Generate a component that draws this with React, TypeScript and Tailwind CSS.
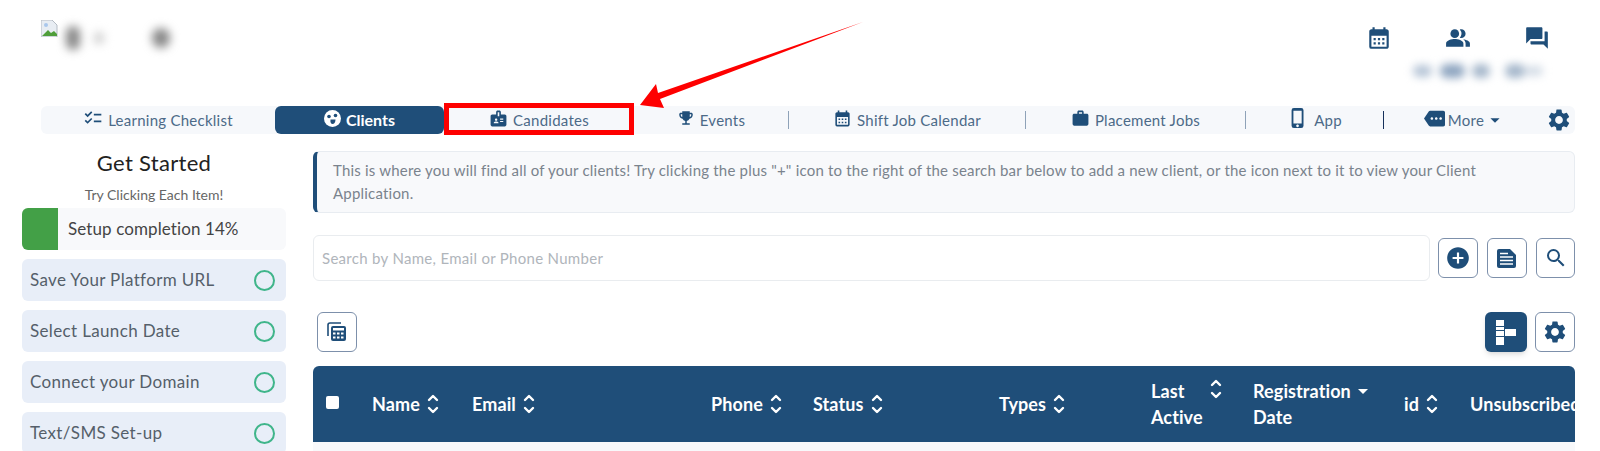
import React from 'react';
import { MdCalendarMonth, MdPeopleAlt, MdForum, MdChecklist, MdBadge, MdEmojiEvents, MdPhoneIphone, MdMore, MdWork, MdArrowDropDown, MdSettings, MdAddCircle, MdSearch } from 'react-icons/md';

const steps = ['Save Your Platform URL', 'Select Launch Date', 'Connect your Domain', 'Text/SMS Set-up'];

const SortIcon: React.FC = () => (
  <svg width="14" height="22" viewBox="0 0 14 22" fill="none" stroke="white" strokeWidth="2.4" strokeLinecap="round" strokeLinejoin="round" className="ml-[6px] shrink-0">
    <path d="M3 7l4-4 4 4" />
    <path d="M3 15l4 4 4-4" />
  </svg>
);

const IconButton: React.FC<{ children: React.ReactNode; className?: string }> = ({ children, className }) => (
  <button className={`flex h-10 w-10 items-center justify-center rounded-md border border-[#7d90ab] bg-white text-[#1f4e79] ${className ?? ''}`}>
    {children}
  </button>
);

const Sep: React.FC<{ dark?: boolean }> = ({ dark }) => (
  <span className={`h-[18px] w-px shrink-0 ${dark ? 'bg-[#16305a]' : 'bg-[#8ea2b8]'}`} />
);

const NavItem: React.FC<{ icon: React.ReactNode; label: string; width: string }> = ({ icon, label, width }) => (
  <div className={`flex h-full items-center justify-center gap-[5px] text-[15px] tracking-[0.25px] text-[#4c6a88] ${width}`}>
    <span className="-mt-1 text-[#1f4e79]">{icon}</span>
    <span>{label}</span>
  </div>
);

const App: React.FC = () => {
  return (
    <div className="relative h-[451px] w-[1600px] overflow-hidden bg-white font-[Lato,sans-serif]">
      {/* Top bar */}
      <div className="flex h-[106px] justify-between pl-[41px] pr-[25px]">
        <div className="flex items-start pt-[20px]">
          <svg width="17" height="17" viewBox="0 0 17 17" className="shrink-0">
            <path d="M0 0h11l5 5v12H0z" fill="#e8edf3" stroke="#b5bcc4" />
            <path d="M1 16l6-6 3 3 3-2 3 3v2z" fill="#4f9e3a" />
            <circle cx="5" cy="5" r="2" fill="#a9c7ec" />
          </svg>
          <div className="ml-[8px] mt-[6px] flex items-center gap-[14px] blur-[5px]">
            <span className="h-[24px] w-[14px] rounded-full bg-[#888]" />
            <span className="h-[12px] w-[10px] rounded-full bg-[#ccc]" />
            <span className="w-[20px]" />
            <span className="h-[20px] w-[18px] rounded-full bg-[#888]" />
          </div>
        </div>
        <div className="flex flex-col items-end pt-[25px]">
          <div className="mr-[25px] flex items-center gap-[53px] text-[#1f4e79]">
            <MdCalendarMonth className="h-[26px] w-[26px]" />
            <MdPeopleAlt className="h-[26px] w-[26px]" />
            <MdForum className="h-[26px] w-[26px]" />
          </div>
          <div className="mr-[32px] mt-[13px] flex w-[130px] items-center blur-[4px]">
            <span className="h-[12px] w-[19px] rounded-full bg-[#b5c4d6]" />
            <span className="ml-[8px] h-[14px] w-[25px] rounded-full bg-[#8ea5c0]" />
            <span className="ml-[7px] h-[14px] w-[18px] rounded-full bg-[#a4b6ca]" />
            <span className="ml-[15px] h-[14px] w-[20px] rounded-full bg-[#a4b6ca]" />
            <span className="h-[10px] w-[18px] rounded-full bg-[#d3dce6]" />
          </div>
        </div>
      </div>

      {/* Nav */}
      <nav className="ml-[41px] flex h-[28px] w-[1534px] items-center rounded-md bg-[#f6f8fb]">
        <NavItem width="w-[234px]" label="Learning Checklist" icon={<MdChecklist className="h-[20px] w-[20px]" />} />
        <div className="flex h-full w-[169px] items-center justify-center gap-[5px] rounded-md bg-[#1f4e79] text-[16px] font-bold text-white">
          <svg width="17" height="17" viewBox="0 0 17 17" className="-mt-1">
            <circle cx="8.5" cy="8.5" r="8.5" fill="white" />
            <circle cx="5" cy="6.5" r="1.8" fill="#1f4e79" />
            <circle cx="11.5" cy="5.5" r="1.8" fill="#1f4e79" />
            <path d="M6.5 9.5h5c0 3-1.5 4.5-3 4.5-1.5 0-2.5-2-2-4.5z" fill="#1f4e79" />
          </svg>
          <span>Clients</span>
        </div>
        <NavItem width="w-[190px]" label="Candidates" icon={<MdBadge className="h-[19px] w-[19px]" />} />
        <NavItem width="w-[154px]" label="Events" icon={<MdEmojiEvents className="h-[18px] w-[18px]" />} />
        <Sep />
        <NavItem width="w-[236px]" label="Shift Job Calendar" icon={<MdCalendarMonth className="h-[19px] w-[19px]" />} />
        <Sep />
        <NavItem width="w-[219px]" label="Placement Jobs" icon={<MdWork className="h-[19px] w-[19px]" />} />
        <Sep />
        <NavItem width="w-[137px]" label="App" icon={<MdPhoneIphone className="h-[22px] w-[22px]" />} />
        <Sep dark />
        <div className="flex h-full w-[146px] items-center justify-center pl-[16px] text-[15px] tracking-[0.25px] text-[#4c6a88]">
          <MdMore className="-mt-1 mr-[3px] h-[21px] w-[21px] text-[#1f4e79]" />
          <span>More</span>
          <MdArrowDropDown className="h-[22px] w-[22px] text-[#1f4e79]" />
        </div>
        <div className="flex flex-1 justify-center pl-[12px] text-[#1f4e79]">
          <MdSettings className="h-[26px] w-[26px]" />
        </div>
      </nav>

      {/* Body */}
      <div className="mt-[14px] flex pl-[22px]">
        <aside className="w-[264px] shrink-0">
          <h2 className="text-center text-[22px] leading-[30px] tracking-[0.3px] text-[#222]">Get Started</h2>
          <p className="mt-[7px] text-center text-[14px] leading-[20px] text-[#666]">Try Clicking Each Item!</p>
          <div className="mt-[3px] flex h-[42px] items-center overflow-hidden rounded-md bg-[#f8f9fb]">
            <div className="h-full w-[36px] bg-[#43a047]" />
            <span className="ml-[10px] text-[17px] tracking-[0.1px] text-[#444]">Setup completion 14%</span>
          </div>
          <div className="mt-[9px] flex flex-col gap-[9px]">
            {steps.map((step) => (
              <div key={step} className="flex h-[42px] shrink-0 items-center justify-between rounded-md bg-[#e8eef8] pl-[8px] pr-[11px] text-[17px] tracking-[0.35px] text-[#555f6a]">
                <span>{step}</span>
                <span className="h-[21px] w-[21px] rounded-full border-2 border-[#3fb58a]" />
              </div>
            ))}
          </div>
        </aside>

        <main className="ml-[27px] mt-[3px] w-[1262px] shrink-0">
          <div className="flex h-[62px] items-center rounded-md border border-l-4 border-[#e8ecf1] border-l-[#1f4e79] bg-[#f8f9fb] pl-[16px] pr-[70px] text-[15px] leading-[23px] tracking-[0.2px] text-[#7a838d]">
            <p>This is where you will find all of your clients! Try clicking the plus "+" icon to the right of the search bar below to add a new client, or the icon next to it to view your Client Application.</p>
          </div>

          <div className="mt-[22px] flex items-center">
            <div className="flex h-[46px] flex-1 items-center rounded-md border border-[#e9ecef] pl-[8px] text-[15px] tracking-[0.3px] text-[#b0b5bb]">
              Search by Name, Email or Phone Number
            </div>
            <div className="ml-[8px] flex gap-[9px]">
              <IconButton><MdAddCircle className="h-[26px] w-[26px]" /></IconButton>
              <IconButton>
                <svg width="20" height="19" viewBox="0 0 20 19" fill="none">
                  <path d="M0 2a2 2 0 0 1 2-2h11l6 6v11a2 2 0 0 1-2 2H2a2 2 0 0 1-2-2z" fill="#1f4e79" />
                  <path d="M3 8h13M3 11.5h13M3 15h13M3 4.500h8" stroke="white" strokeWidth="1.6" />
                </svg>
              </IconButton>
              <IconButton className="w-[39px]"><MdSearch className="h-[24px] w-[24px]" /></IconButton>
            </div>
          </div>

          <div className="mt-[31px] flex items-center justify-between pl-[4px]">
            <IconButton>
              <svg width="20" height="20" viewBox="0 0 20 20" fill="none">
                <path d="M1 14V3a2 2 0 0 1 2-2h11" stroke="#1f4e79" strokeWidth="1.6" />
                <rect x="4" y="4" width="15" height="15" rx="2" fill="#1f4e79" />
                <rect x="6" y="6" width="11" height="2.500" fill="white" />
                <path d="M6 10.500h2.500v2H6zm4 0h2.500v2H10zm4 0h2.500v2H14zM6 14.500h2.500v2H6zm4 0h2.500v2H10zm4 0h2.500v2H14z" fill="white" />
              </svg>
            </IconButton>
            <div className="flex gap-[8px]">
              <button className="flex h-10 w-[42px] items-center justify-center rounded-md bg-[#1f4e79] shadow-md">
                <svg width="20" height="25" viewBox="0 0 20 25" fill="white">
                  <rect x="0" y="0" width="8" height="6" />
                  <rect x="0" y="7" width="8" height="3" />
                  <rect x="0" y="11" width="8" height="5" />
                  <rect x="0" y="17" width="8" height="8" />
                  <rect x="9" y="9" width="11" height="7" />
                </svg>
              </button>
              <IconButton><MdSettings className="h-[26px] w-[26px]" /></IconButton>
            </div>
          </div>

          {/* Table header */}
          <div className="mt-[14px] grid h-[76px] grid-cols-[59px_100px_239px_102px_186px_152px_102px_151px_66px_105px] items-center overflow-hidden whitespace-nowrap rounded-t-md bg-[#1f4e79] text-[18px] font-bold tracking-[0.1px] text-white">
            <div className="pl-[13px]"><span className="-mt-[3px] block h-[13px] w-[13px] rounded-[2px] bg-white" /></div>
            <div className="flex items-center">Name<SortIcon /></div>
            <div className="flex items-center">Email<SortIcon /></div>
            <div className="flex items-center">Phone<SortIcon /></div>
            <div className="flex items-center">Status<SortIcon /></div>
            <div className="flex items-center">Types<SortIcon /></div>
            <div className="flex items-start justify-between pr-[32px] leading-[26px]">
              <span>Last<br />Active</span>
              <SortIcon />
            </div>
            <div className="leading-[26px]">
              <span className="flex items-center">Registration<MdArrowDropDown className="h-[24px] w-[24px]" /></span>
              <span>Date</span>
            </div>
            <div className="flex items-center">id<SortIcon /></div>
            <div>Unsubscribed</div>
          </div>
          <div className="h-[10px] bg-[#f8f9fb]" />
        </main>
      </div>

      {/* Annotation */}
      <div className="absolute left-[444px] top-[103px] h-[32px] w-[190px] border-[5px] border-[#fe0000]" />
      <svg className="absolute left-0 top-0" width="1600" height="451" viewBox="0 0 1600 451">
        <polygon points="863,22 660,99 664,108 640,105 656,84 658,93" fill="#fe0000" />
      </svg>
    </div>
  );
};

export default App;
